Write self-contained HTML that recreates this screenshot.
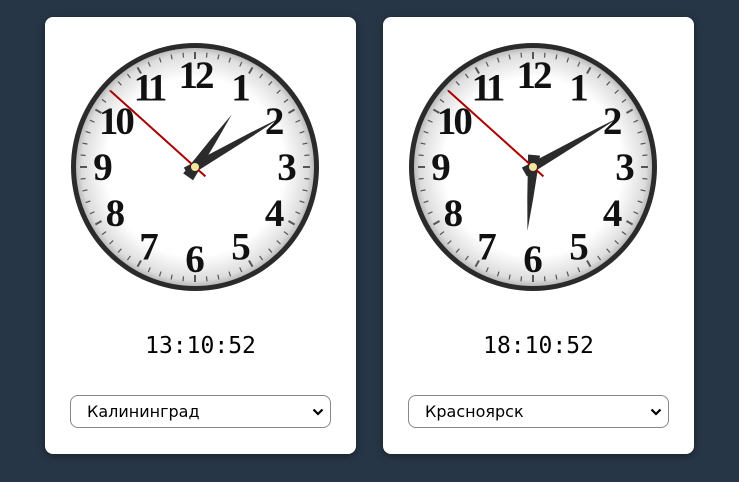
<!DOCTYPE html>
<html><head><meta charset="utf-8"><style>
html,body{margin:0;padding:0;width:739px;height:482px;overflow:hidden;background:#273646;font-family:"Liberation Sans","DejaVu Sans",sans-serif}
.card{position:absolute;top:17px;width:311px;height:437px;background:#fff;border-radius:8px;box-shadow:0 2px 8px rgba(0,0,0,.4)}
.card svg{position:absolute;left:24px;top:24px}
.time{position:absolute;top:316px;left:0;width:100%;text-align:center;font-family:"DejaVu Sans Mono","Liberation Mono",monospace;font-size:23px;color:#000}
.sel{position:absolute;left:25px;top:378px;width:261px;height:33px;border:1px solid #888;border-radius:8px;box-sizing:border-box;font-size:16px;line-height:31px;padding-left:16px;color:#000;font-family:"DejaVu Sans","Liberation Sans",sans-serif}
.sel svg{position:absolute;left:auto;right:6px;top:12px}
</style></head><body>
<div class="card" style="left:45px"><svg class="clk" data-h="35" data-m="60" width="252" height="252"></svg><div class="time">13:10:52</div><div class="sel">Калининград<svg width="12" height="8" viewBox="0 0 12 8"><path d="M1.5 1.5 L6 6 L10.5 1.5" stroke="#000" stroke-width="2.2" fill="none"/></svg></div></div>
<div class="card" style="left:383px"><svg class="clk" data-h="185" data-m="60" width="252" height="252"></svg><div class="time">18:10:52</div><div class="sel">Красноярск<svg width="12" height="8" viewBox="0 0 12 8"><path d="M1.5 1.5 L6 6 L10.5 1.5" stroke="#000" stroke-width="2.2" fill="none"/></svg></div></div>
<script>
document.querySelectorAll('svg.clk').forEach(function(s,i){
var c=126,h='<defs><radialGradient id="g'+i+'"><stop offset="0.75" stop-color="#fff"/><stop offset="0.95" stop-color="#ddd"/><stop offset="1" stop-color="#bbb"/></radialGradient></defs>';
h+='<circle cx="126" cy="126" r="124" fill="#2b2b2b"/><circle cx="126" cy="126" r="119" fill="url(#g'+i+')"/>';
for(var k=0;k<60;k++){var a=k*6*Math.PI/180,r1=k%5?110:108,r2=115;
h+='<line x1="'+(c+r1*Math.sin(a))+'" y1="'+(c-r1*Math.cos(a))+'" x2="'+(c+r2*Math.sin(a))+'" y2="'+(c-r2*Math.cos(a))+'" stroke="#555" stroke-width="'+(k%5?1.2:2)+'"/>';}
for(var n=1;n<=12;n++){var a=n*30*Math.PI/180,r=92;
h+='<text x="'+(c+r*Math.sin(a))+'" y="'+(c-r*Math.cos(a)+13)+'" text-anchor="middle" font-family="Liberation Serif,serif" font-weight="bold" font-size="39" fill="#111" '+(n>9?'letter-spacing="-3"':'')+'>'+n+'</text>';}
var H=s.dataset.h,M=s.dataset.m;
h+='<g transform="rotate('+H+' 126 126)"><path d="M120 138 L123 95 L126 62 L129 95 L132 138 Z" fill="#2b2b2b"/></g>';
h+='<g transform="rotate('+M+' 126 126)"><path d="M121 136 L124 60 L126 28 L128 60 L131 136 Z" fill="#2b2b2b"/></g>';
h+='<g transform="rotate(312 126 126)"><line x1="126" y1="140" x2="126" y2="12" stroke="#a00" stroke-width="2"/></g>';
h+='<circle cx="126" cy="126" r="4" fill="#f3e6a0"/>';
s.innerHTML=h;});
</script>
</body></html>
